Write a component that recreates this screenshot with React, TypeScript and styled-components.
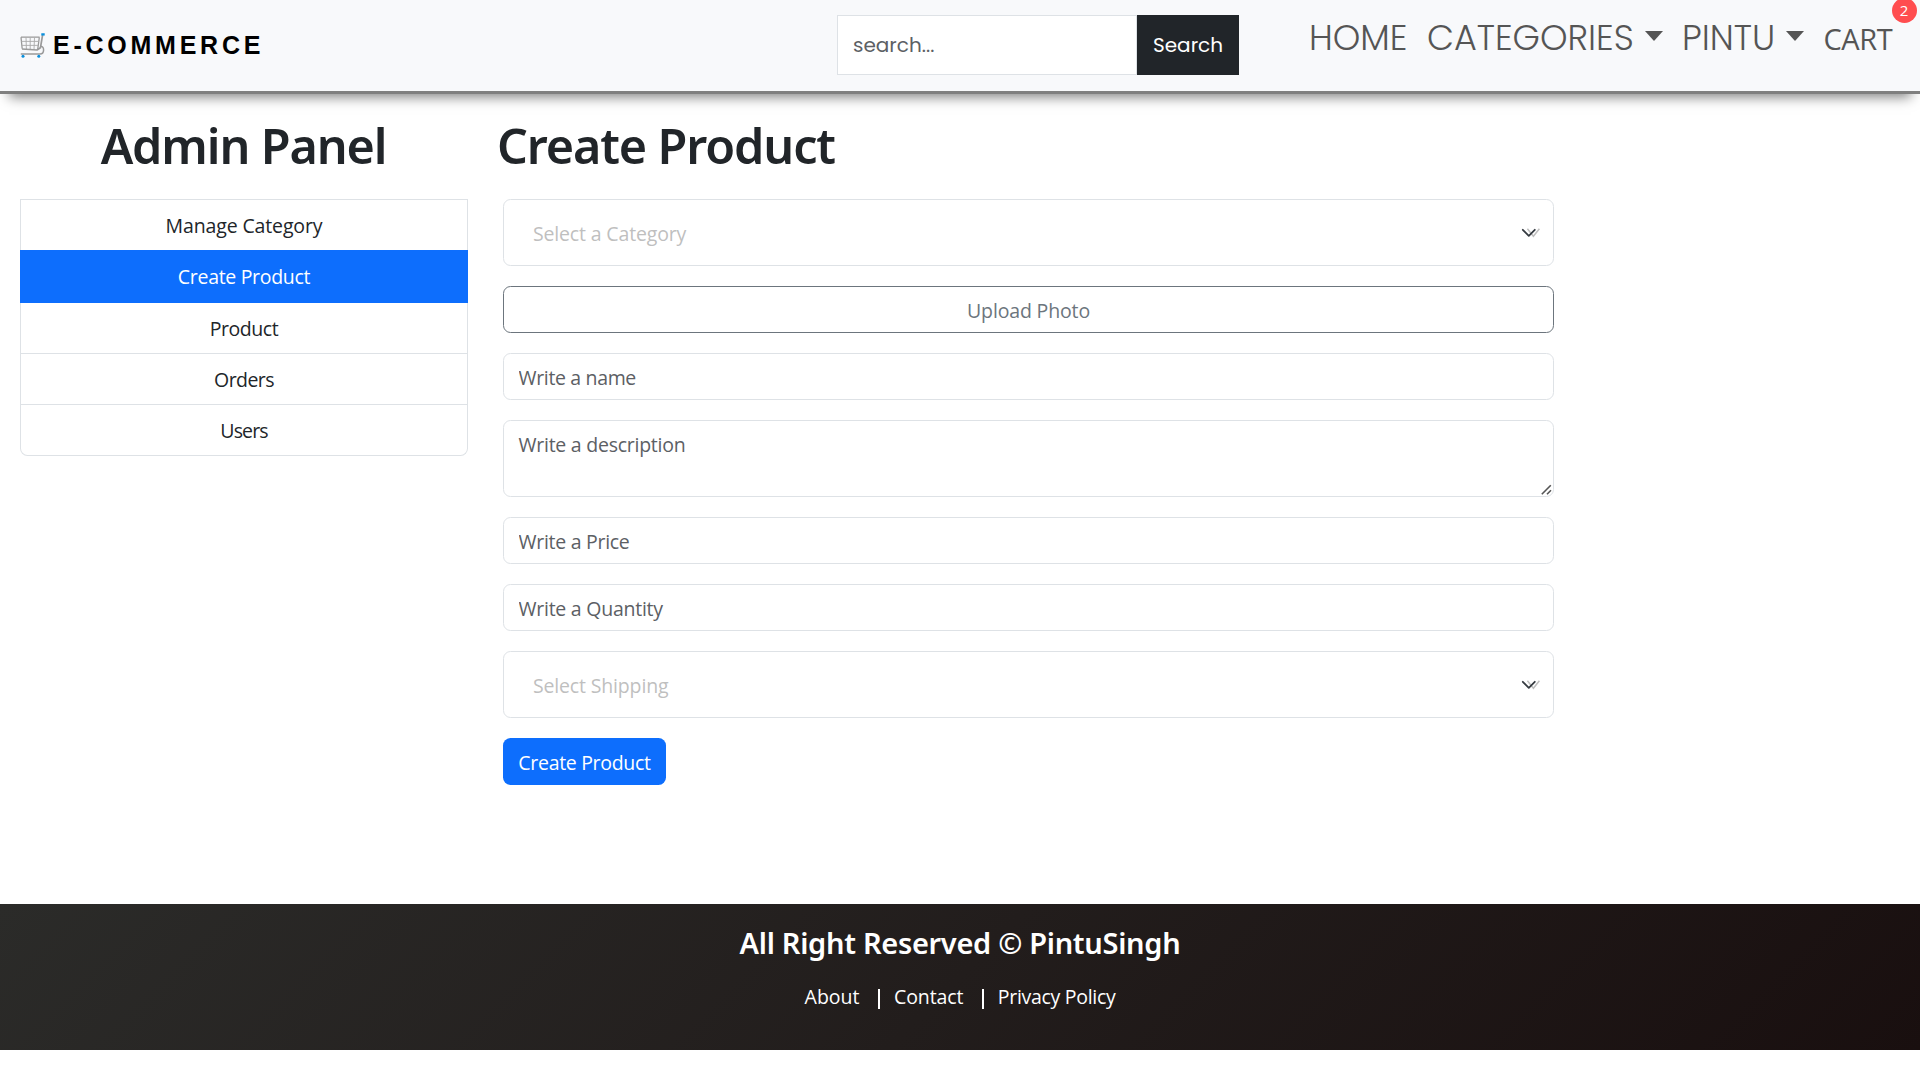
import React from "react";
import styled, { createGlobalStyle } from "styled-components";

const ui = `"Segoe UI", "Open Sans", "Noto Sans", sans-serif`;
const heading = `"Segoe UI", "Noto Sans", "Open Sans", sans-serif`;

const GlobalStyle = createGlobalStyle`
  *, *::before, *::after { box-sizing: border-box; }
  body {
    margin: 0;
    background: #fff;
    color: #212529;
    font-family: ${ui};
    font-size: 19.5px;
    line-height: 30px;
  }
`;

const Page = styled.div`
  display: flex;
  flex-direction: column;
`;

const Navbar = styled.header`
  display: flex;
  align-items: center;
  height: 94px;
  padding: 0 0 1px 20px;
  background: #f8f9fb;
  border-bottom: 3px solid #7f7f7f;
  box-shadow: 0 12px 12px -9px rgba(0, 0, 0, 0.5);
`;

const Brand = styled.a`
  display: flex;
  align-items: center;
  width: 817px;
  color: #000;
  font: 700 25px/30px "Liberation Sans", Arial, sans-serif;
  letter-spacing: 3.75px;
`;

const BrandIcon = styled.svg`
  width: 25px;
  height: 25px;
  margin-right: 8px;
`;

const SearchForm = styled.form`
  display: flex;
  width: 402px;
  height: 60px;
`;

const SearchInput = styled.input`
  width: 300px;
  padding: 0 15px;
  border: 1px solid #dee2e6;
  border-radius: 0;
  background: #fff;
  font: 400 20px/30px Poppins, Inter, sans-serif;
  &::placeholder {
    color: #5c6064;
    opacity: 1;
  }
`;

const SearchButton = styled.button`
  width: 102px;
  padding: 0;
  border: 0;
  background: #212529;
  color: #fff;
  font: 400 20px/30px Poppins, Inter, sans-serif;
`;

const Nav = styled.nav`
  display: flex;
  align-items: baseline;
  align-self: flex-start;
  gap: 19.5px;
  margin: 18px 0 0 70px;
`;

const NavLink = styled.a<{ $width: number }>`
  display: flex;
  align-items: center;
  justify-content: space-between;
  width: ${(p) => p.$width}px;
  color: #555;
  font: 300 35px/40px Poppins, Lato, sans-serif;
  white-space: nowrap;
`;

const Caret = styled.span`
  margin-bottom: 4px;
  border-top: 10px solid #555;
  border-left: 9.6px solid transparent;
  border-right: 9.6px solid transparent;
`;

const CartLink = styled(NavLink)`
  position: relative;
  font: 400 29px/40px ${ui};
  letter-spacing: -0.4px;
`;

const Badge = styled.sup`
  position: absolute;
  top: -21px;
  left: 68px;
  width: 25px;
  height: 25px;
  border-radius: 50%;
  background: #ff4d4f;
  color: #fff;
  font: 400 15px/25px ${ui};
  letter-spacing: 0;
  text-align: center;
`;

const Main = styled.main`
  display: flex;
  gap: 30px;
  height: 810px;
  padding: 21px 20px 0;
`;

const Sidebar = styled.aside`
  width: 448px;
  text-align: center;
`;

const Title = styled.h1`
  margin: 0 0 24px -1px;
  font: 600 48.5px/60px ${heading};
  letter-spacing: -1.12px;
`;

const Menu = styled.div`
  display: flex;
  flex-direction: column;
`;

const MenuItem = styled.a<{ $active?: boolean; $spacing: number }>`
  display: flex;
  align-items: center;
  justify-content: center;
  height: ${(p) => (p.$active ? 53 : 51)}px;
  padding-top: 2px;
  border: 1px solid ${(p) => (p.$active ? "#0d6efd" : "#dee2e6")};
  border-top-width: 0;
  background: ${(p) => (p.$active ? "#0d6efd" : "#fff")};
  color: ${(p) => (p.$active ? "#fff" : "#212529")};
  letter-spacing: ${(p) => p.$spacing}px;
  &:first-child {
    border-top-width: 1px;
    border-bottom-width: 0;
  }
  &:last-child {
    border-radius: 0 0 7.5px 7.5px;
  }
`;

const Content = styled.section`
  width: 1056px;
`;

const Form = styled.form`
  display: flex;
  flex-direction: column;
  align-items: stretch;
  gap: 20px;
  margin-left: 5px;
`;

const Select = styled.div<{ $spacing: number }>`
  display: flex;
  align-items: center;
  justify-content: space-between;
  height: 67px;
  padding: 2px 12.5px 0 29px;
  border: 1px solid #dee2e6;
  border-radius: 7.5px;
  color: #bfbfbf;
  letter-spacing: ${(p) => p.$spacing}px;
`;

const Arrows = styled.svg`
  width: 20px;
  height: 12px;
  margin-bottom: 2px;
`;

const Upload = styled.label`
  height: 47px;
  border: 1px solid #6c757d;
  border-radius: 7.5px;
  color: #6c757d;
  line-height: 47px;
  letter-spacing: -0.15px;
  text-align: center;
`;

const Field = styled.input<{ $spacing: number }>`
  height: 47px;
  padding: 1px 14.5px 0;
  border: 1px solid #dee2e6;
  border-radius: 7.5px;
  background: #fff;
  font: 400 19.5px/30px ${ui};
  letter-spacing: ${(p) => p.$spacing}px;
  &::placeholder {
    color: #5c6064;
    opacity: 1;
  }
`;

const AreaWrap = styled.div`
  position: relative;
  display: flex;
  height: 77px;
`;

const Area = styled.textarea`
  flex: 1;
  padding: 9px 14.5px;
  border: 1px solid #dee2e6;
  border-radius: 7.5px;
  background: #fff;
  font: 400 19.5px/30px ${ui};
  letter-spacing: -0.25px;
  resize: none;
  &::placeholder {
    color: #5c6064;
    opacity: 1;
  }
`;

const Grip = styled.svg`
  position: absolute;
  right: 2px;
  bottom: 2px;
  width: 11px;
  height: 11px;
`;

const Submit = styled.button`
  align-self: flex-start;
  width: 163px;
  height: 47px;
  padding: 2px 0 0;
  border: 0;
  border-radius: 7.5px;
  background: #0d6efd;
  color: #fff;
  font: 400 19.5px/30px ${ui};
  letter-spacing: -0.31px;
`;

const Footer = styled.footer`
  display: flex;
  flex-direction: column;
  align-items: center;
  height: 146px;
  padding-top: 21px;
  background: linear-gradient(135deg, #2b2b29, #190f0f);
  color: #fff;
`;

const FooterTitle = styled.h4`
  margin: 0;
  font: 600 29px/36px ${heading};
  letter-spacing: -0.3px;
`;

const FooterLinks = styled.div`
  display: flex;
  margin-top: 21px;
`;

const FooterLink = styled.a<{ $spacing: number }>`
  letter-spacing: ${(p) => p.$spacing}px;
`;

const Divider = styled.span`
  width: 2px;
  height: 20px;
  margin: 7px 13.5px 0 19px;
  background: #fff;
`;

const CartIcon = () => (
  <BrandIcon viewBox="0 0 25 25" fill="none">
    <path d="M1 4.2h18.6M1 4.2l1.2 11.6M19.3 4.5l-1.6 12" stroke="#999" strokeWidth="1.3" />
    <path d="M6 4.5l.4 11.7M10.2 4.5v11.9M14.5 4.5l-.5 12M1.4 8.4h17.4M1.8 12.4h16.4" stroke="#aaa" strokeWidth=".9" />
    <path d="M2 16l15 1 3.4-2.2L22.6 2" stroke="#9a9a9a" strokeWidth="1.7" strokeLinejoin="round" />
    <path d="M20.8 13.2c3.8 0 3.9 7.8-.8 7.8H.8" stroke="#999" strokeWidth="1.5" />
    <path d="M21.3 1.4h3.4" stroke="#0a8fdc" strokeWidth="2.3" />
    <circle cx="3" cy="23.3" r="1.5" fill="#0a8fdc" />
    <circle cx="18.8" cy="23.3" r="1.5" fill="#0a8fdc" />
  </BrandIcon>
);

const SelectArrows = () => (
  <Arrows viewBox="0 0 20 12" fill="none">
    <path d="M6.4 1.8l6 7.4 6-7.4" stroke="#bfbfbf" strokeWidth="1.5" />
    <path d="M1.8 2.8l6 6 6-6" stroke="#343a40" strokeWidth="1.8" strokeLinecap="round" strokeLinejoin="round" />
  </Arrows>
);

const menu = [
  { label: "Manage Category", spacing: -0.13 },
  { label: "Create Product", spacing: -0.31, active: true },
  { label: "Product", spacing: -0.47 },
  { label: "Orders", spacing: -0.56 },
  { label: "Users", spacing: -0.88 },
];

export default function App() {
  return (
    <Page>
      <GlobalStyle />
      <Navbar>
        <Brand>
          <CartIcon />
          E-COMMERCE
        </Brand>
        <SearchForm>
          <SearchInput placeholder="search..." />
          <SearchButton type="button">Search</SearchButton>
        </SearchForm>
        <Nav>
          <NavLink $width={98.5}>HOME</NavLink>
          <NavLink $width={235.5}>
            CATEGORIES
            <Caret />
          </NavLink>
          <NavLink $width={122}>
            PINTU
            <Caret />
          </NavLink>
          <CartLink $width={72}>
            CART
            <Badge>2</Badge>
          </CartLink>
        </Nav>
      </Navbar>
      <Main>
        <Sidebar>
          <Title>Admin Panel</Title>
          <Menu>
            {menu.map((m) => (
              <MenuItem key={m.label} $active={m.active} $spacing={m.spacing}>
                {m.label}
              </MenuItem>
            ))}
          </Menu>
        </Sidebar>
        <Content>
          <Title>Create Product</Title>
          <Form>
            <Select $spacing={-0.16}>
              Select a Category
              <SelectArrows />
            </Select>
            <Upload>Upload Photo</Upload>
            <Field placeholder="Write a name" $spacing={-0.34} />
            <AreaWrap>
              <Area placeholder="Write a description" />
              <Grip viewBox="0 0 11 11" stroke="#555" strokeWidth="1.6">
                <path d="M.8 10.2l9-9M6 10.2l4-4" />
              </Grip>
            </AreaWrap>
            <Field placeholder="Write a Price" $spacing={-0.28} />
            <Field placeholder="Write a Quantity" $spacing={-0.25} />
            <Select $spacing={-0.16}>
              Select Shipping
              <SelectArrows />
            </Select>
            <Submit type="button">Create Product</Submit>
          </Form>
        </Content>
      </Main>
      <Footer>
        <FooterTitle>All Right Reserved © PintuSingh</FooterTitle>
        <FooterLinks>
          <FooterLink $spacing={0}>About</FooterLink>
          <Divider />
          <FooterLink $spacing={-0.1}>Contact</FooterLink>
          <Divider />
          <FooterLink $spacing={-0.3}>Privacy Policy</FooterLink>
        </FooterLinks>
      </Footer>
    </Page>
  );
}
